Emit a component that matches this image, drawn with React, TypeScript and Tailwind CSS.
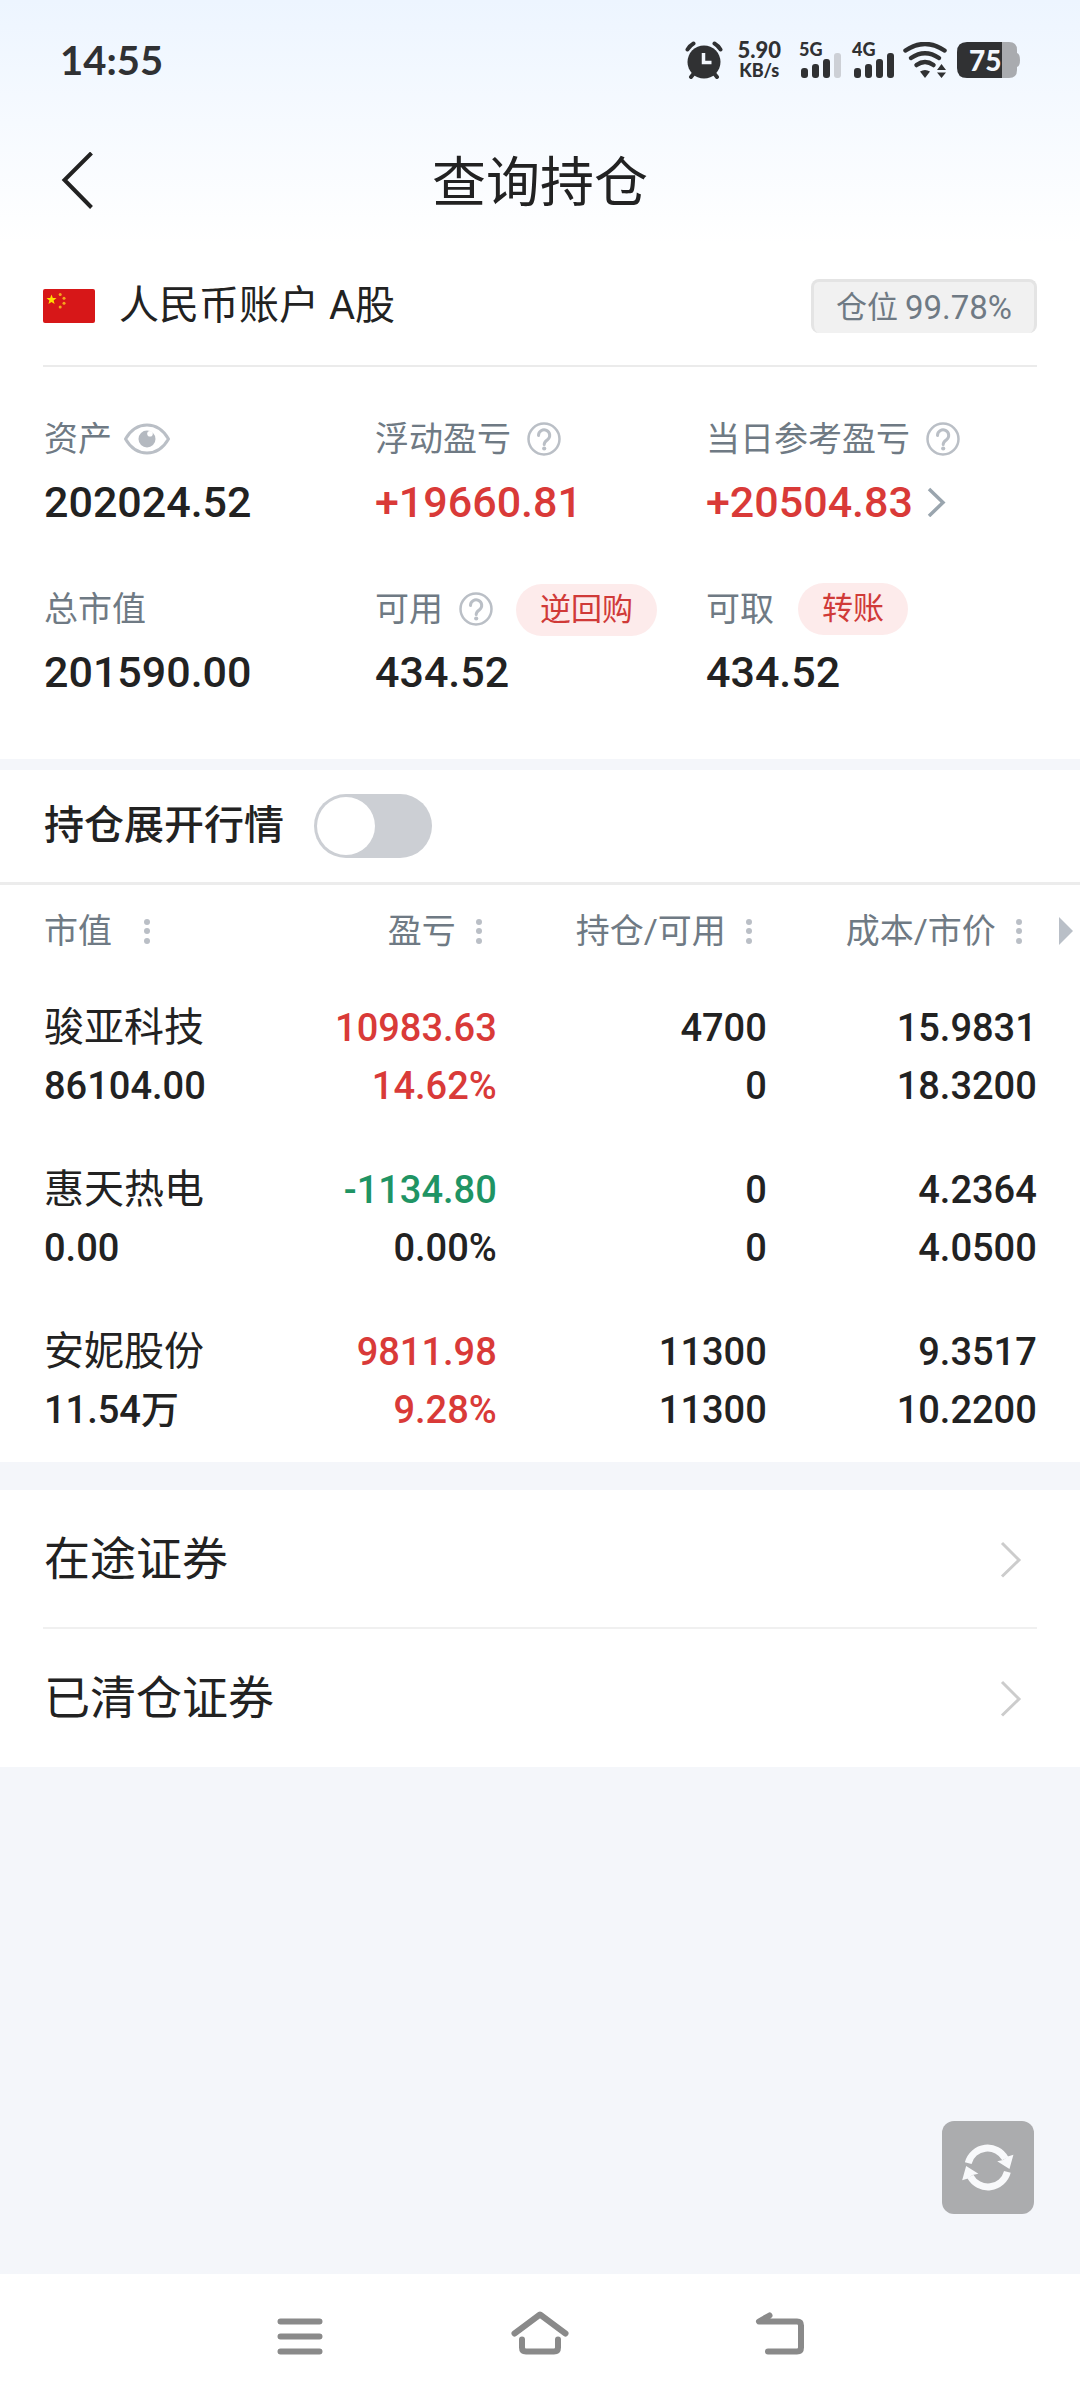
import { useState } from 'react';
import clsx from 'clsx';

type Tone = 'up' | 'down' | 'flat';

interface Holding {
    name: string;
    value: string;
    profit: string;
    profitTone: Tone;
    rate: string;
    rateTone: Tone;
    amount: string;
    available: string;
    cost: string;
    price: string;
}

const toneClass: Record<Tone, string> = {
    up: 'text-[#d93a38]',
    down: 'text-[#1f9464]',
    flat: 'text-[#222222]',
};

const holdings: Holding[] = [
    {
        name: '骏亚科技', value: '86104.00',
        profit: '10983.63', profitTone: 'up', rate: '14.62%', rateTone: 'up',
        amount: '4700', available: '0', cost: '15.9831', price: '18.3200',
    },
    {
        name: '惠天热电', value: '0.00',
        profit: '-1134.80', profitTone: 'down', rate: '0.00%', rateTone: 'flat',
        amount: '0', available: '0', cost: '4.2364', price: '4.0500',
    },
    {
        name: '安妮股份', value: '11.54万',
        profit: '9811.98', profitTone: 'up', rate: '9.28%', rateTone: 'up',
        amount: '11300', available: '11300', cost: '9.3517', price: '10.2200',
    },
];

const columns = ['盈亏', '持仓/可用', '成本/市价'];

const SignalBars = ({ label, level }: { label: string; level: number }) => (
    <div className="relative h-9 w-11">
        <span className="absolute left-0 top-0 text-[18px] leading-[14px] font-black">{label}</span>
        <svg width="44" height="36" viewBox="0 0 44 36">
            {[10, 14, 19, 25].map((h, i) => (
                <rect
                    key={h}
                    x={2 + i * 11}
                    y={36 - h}
                    width="7"
                    height={h}
                    rx="3"
                    fill={i < level ? '#303133' : '#cdd0d6'}
                />
            ))}
        </svg>
    </div>
);

const StatusBar = () => (
    <div className="flex h-[120px] items-center justify-between px-[60px] font-['Lato','Noto_Sans_CJK_SC',sans-serif] text-[#303133]">
        <span className="text-[40px] leading-none font-bold">14:55</span>
        <div className="flex items-center">
            <svg width="38" height="38" viewBox="0 0 38 38" className="mr-[14px]">
                <path d="M10 31l-4 5M28 31l4 5" stroke="#303133" strokeWidth="4" strokeLinecap="round" />
                <path d="M2.5 8.500q2.500-4 6-6M35.500 8.500q-2.500-4-6-6" stroke="#303133" strokeWidth="4" strokeLinecap="round" fill="none" />
                <circle cx="19" cy="21" r="16.500" fill="#303133" />
                <path d="M18.500 12v9.500h8" stroke="#f3f7fd" strokeWidth="3.500" fill="none" />
            </svg>
            <div className="mr-[18px] flex flex-col items-center font-black">
                <span className="text-[22px] leading-[20px]">5.90</span>
                <span className="text-[18px] leading-[20px]">KB/s</span>
            </div>
            <div className="flex gap-[9px]">
                <SignalBars label="5G" level={3} />
                <SignalBars label="4G" level={4} />
            </div>
            <svg width="44" height="36" viewBox="0 0 44 36" className="ml-[7px] mr-[10px]">
                <g stroke="#303133" strokeWidth="4.500" strokeLinecap="round" fill="none">
                    <path d="M2.500 8.500Q22-4.500 41.500 8.500" />
                    <path d="M8 16Q22 6.500 36 16" />
                    <path d="M13.500 23Q22 17 30.500 23" />
                </g>
                <path d="M17 29.500q5-3 10 0l-5 6.500z" fill="#303133" />
                <path d="M34 28l4.500-6 4.500 6zM34 30.500h9l-4.500 5.500z" fill="#303133" />
            </svg>
            <div className="relative h-9 w-[63px]">
                <svg width="63" height="36" viewBox="0 0 63 36">
                    <path d="M45 0h7q8 0 8 8v3q3 1 3 7t-3 7v3q0 8-8 8h-7z" fill="#a9abaf" />
                    <path d="M10 0h35v36H10Q0 36 0 26V10Q0 0 10 0z" fill="#303133" />
                </svg>
                <span className="absolute inset-y-0 left-[12px] text-[28px] leading-[36px] font-black text-[#f3f7fd]">75</span>
            </div>
        </div>
    </div>
);

const HelpButton = ({ label }: { label: string }) => (
    <button aria-label={label}>
        <svg width="36" height="36" viewBox="0 0 36 36" fill="none" stroke="#babfc6">
            <circle cx="18" cy="18" r="15.500" strokeWidth="2.500" />
            <path d="M12.500 14.500a5.600 5.600 0 1 1 9 4.300c-2.300 1.700-3.300 2.300-3.300 4.700" strokeWidth="3" strokeLinecap="round" />
            <circle cx="18.200" cy="27.500" r="2.100" fill="#babfc6" stroke="none" />
        </svg>
    </button>
);

const EyeIcon = () => (
    <svg width="48" height="34" viewBox="0 0 48 34">
        <path d="M2.500 17C8 7.500 15.500 3 24 3s16 4.500 21.500 14C40 26.500 32.500 31 24 31S8 26.500 2.500 17z" fill="none" stroke="#babfc6" strokeWidth="3" strokeLinejoin="round" />
        <circle cx="24" cy="17" r="8.500" fill="#b4b9c0" />
        <circle cx="27" cy="11.800" r="2.800" fill="#fff" />
    </svg>
);

const Pill = ({ children }: { children: string }) => (
    <button className="h-[52px] rounded-full bg-[#fdebeb] px-6 text-[31px] leading-[50px] text-[#d03a38]">
        {children}
    </button>
);

const Dots = () => (
    <svg width="6" height="30" viewBox="0 0 6 30" fill="#babfc6">
        <circle cx="3" cy="6" r="3" />
        <circle cx="3" cy="15" r="3" />
        <circle cx="3" cy="25" r="3" />
    </svg>
);

const LinkRow = ({ label }: { label: string }) => (
    <a href="#" className="flex h-[138px] items-center justify-between pr-[15px] pl-px text-[46px] leading-[60px]">
        {label}
        <svg width="22" height="38" viewBox="0 0 22 38" fill="none" stroke="#cccccc" strokeWidth="3">
            <path d="M2 3L19 20 2 36.500" />
        </svg>
    </a>
);

const App = () => {
    const [expanded, setExpanded] = useState(false);

    return (
        <div className="flex min-h-screen flex-col bg-[#f4f6fa] font-['Roboto','Noto_Sans_CJK_SC',sans-serif] text-[#222222]">
            <header className="bg-linear-to-b from-[#edf5ff] to-white">
                <StatusBar />
                <div className="grid h-[124px] grid-cols-[1fr_auto_1fr] items-center px-[60px]">
                    <button aria-label="返回" className="justify-self-start">
                        <svg width="36" height="60" viewBox="0 0 36 60" fill="none" stroke="#222222" strokeWidth="4">
                            <path d="M31.500 1L4.500 28 31.500 55.500" />
                        </svg>
                    </button>
                    <h1 className="pt-1 text-[54px] leading-[72px]">查询持仓</h1>
                </div>
            </header>

            <section className="bg-white px-[43px]">
                <div className="flex h-[123px] items-center justify-between border-b-2 border-[#ebebeb] pt-[3px]">
                    <div className="flex items-center gap-6">
                        <svg width="52" height="34" viewBox="0 0 52 34">
                            <rect width="52" height="34" rx="2" fill="#d71718" />
                            <path d="M8.500 5.500l1.300 3.500 3.700.1-2.900 2.300 1 3.600-3.100-2.100-3.100 2.100 1-3.600-2.900-2.300 3.700-.1z" fill="#ffde00" />
                            <g fill="#f5a81c">
                                <circle cx="17.200" cy="5.500" r="1.500" />
                                <circle cx="21" cy="9.200" r="1.500" />
                                <circle cx="21" cy="14.300" r="1.500" />
                                <circle cx="17.200" cy="18" r="1.500" />
                            </g>
                        </svg>
                        <h2 className="text-[40px] leading-[52px]">人民币账户 A股</h2>
                    </div>
                    <div className="flex h-[54px] items-center gap-[7px] rounded-lg border-[3px] border-b-0 border-[#e4e4e4] bg-[#f1f1f1] px-[22px] leading-[48px] text-[#6f7a84]">
                        <span className="text-[31px]">仓位</span>
                        <span className="text-[33px]">99.78%</span>
                    </div>
                </div>

                <dl className="grid grid-cols-3 gap-y-[55px] pt-[46px] pb-[61px] pl-px text-[34px] text-[#6f7a84]">
                    <div>
                        <dt className="flex h-[52px] items-center gap-[11px]">
                            资产
                            <button aria-label="隐藏资产"><EyeIcon /></button>
                        </dt>
                        <dd className="mt-[11px] text-[43px] leading-[52px] font-medium text-[#222222]">202024.52</dd>
                    </div>
                    <div>
                        <dt className="flex h-[52px] items-center gap-[15px]">
                            浮动盈亏
                            <HelpButton label="浮动盈亏说明" />
                        </dt>
                        <dd className="mt-[11px] text-[43px] leading-[52px] font-medium text-[#d93a38]">+19660.81</dd>
                    </div>
                    <div>
                        <dt className="flex h-[52px] items-center gap-[15px]">
                            当日参考盈亏
                            <HelpButton label="当日参考盈亏说明" />
                        </dt>
                        <dd className="mt-[11px] flex items-center gap-[14px] text-[43px] leading-[52px] font-medium text-[#d93a38]">
                            +20504.83
                            <svg width="20" height="30" viewBox="0 0 20 30" fill="none" stroke="#9aa5ae" strokeWidth="3.500">
                                <path d="M2 2l14 13.500L2 29" />
                            </svg>
                        </dd>
                    </div>
                    <div>
                        <dt className="flex h-[52px] items-center">总市值</dt>
                        <dd className="mt-[11px] text-[43px] leading-[52px] font-medium text-[#222222]">201590.00</dd>
                    </div>
                    <div>
                        <dt className="flex h-[52px] items-center gap-[15px]">
                            可用
                            <HelpButton label="可用说明" />
                            <span className="pl-[7px]"><Pill>逆回购</Pill></span>
                        </dt>
                        <dd className="mt-[11px] text-[43px] leading-[52px] font-medium text-[#222222]">434.52</dd>
                    </div>
                    <div>
                        <dt className="flex h-[52px] items-center gap-6">
                            可取
                            <Pill>转账</Pill>
                        </dt>
                        <dd className="mt-[11px] text-[43px] leading-[52px] font-medium text-[#222222]">434.52</dd>
                    </div>
                </dl>
            </section>

            <section className="mt-[11px] bg-white">
                <label className="flex h-[115px] items-center gap-[30px] border-b-[3px] border-[#ececec] px-11 text-[40px] leading-[52px] font-medium">
                    持仓展开行情
                    <input
                        type="checkbox"
                        role="switch"
                        checked={expanded}
                        onChange={(e) => setExpanded(e.target.checked)}
                        className="flex h-16 w-[118px] appearance-none items-center rounded-full bg-[#cccfd4] px-[3px] before:h-[58px] before:w-[58px] before:rounded-full before:bg-white checked:justify-end checked:bg-[#d93a38]"
                    />
                </label>

                <table className="w-full table-fixed">
                    <thead className="text-[34px] leading-[52px] text-[#6f7a84]">
                        <tr className="h-[91px]">
                            <th className="w-[21%] pl-11 font-normal">
                                <button className="flex items-center gap-8">
                                    市值
                                    <Dots />
                                </button>
                            </th>
                            {columns.map((col) => (
                                <th key={col} className="w-[25%] pr-[15px] font-normal">
                                    <button className="ml-auto flex items-center gap-5">
                                        {col}
                                        <Dots />
                                    </button>
                                </th>
                            ))}
                            <th className="w-[4%] pr-[7px]">
                                <button aria-label="更多列" className="ml-auto block">
                                    <svg width="14" height="28" viewBox="0 0 14 28" fill="#b9bfc7">
                                        <path d="M0 0l14 14L0 28z" />
                                    </svg>
                                </button>
                            </th>
                        </tr>
                    </thead>
                    <tbody className="text-[38px] leading-[58px] font-medium">
                        {holdings.map((h) => (
                            <tr key={h.name} className="h-[162px] text-right">
                                <td className="pl-11 text-left whitespace-nowrap">
                                    <div className="text-[40px] font-normal">{h.name}</div>
                                    <div>{h.value}</div>
                                </td>
                                <td>
                                    <div className={clsx(toneClass[h.profitTone])}>{h.profit}</div>
                                    <div className={clsx(toneClass[h.rateTone])}>{h.rate}</div>
                                </td>
                                <td>
                                    <div>{h.amount}</div>
                                    <div>{h.available}</div>
                                </td>
                                <td>
                                    <div>{h.cost}</div>
                                    <div>{h.price}</div>
                                </td>
                                <td />
                            </tr>
                        ))}
                    </tbody>
                </table>
            </section>

            <section className="mt-7 bg-white px-[43px]">
                <LinkRow label="在途证券" />
                <hr className="-mt-px border-t-2 border-[#f0f0f0]" />
                <LinkRow label="已清仓证券" />
            </section>

            <div className="flex flex-1 items-end justify-end pr-[46px] pb-[60px]">
                <button aria-label="刷新" className="rounded-xl bg-[#abacae]">
                    <svg width="92" height="93" viewBox="0 0 93 93">
                        <g id="arrow">
                            <path d="M26.500 42A20.300 20.300 0 0 1 64 37.500" fill="none" stroke="#f8f9fb" strokeWidth="7" />
                            <path d="M68.200 48L55.800 40.300l6-1.300 4.700-3.500 5.700-2z" fill="#f8f9fb" />
                        </g>
                        <use href="#arrow" transform="rotate(180 46.300 46.500)" />
                    </svg>
                </button>
            </div>

            <nav className="grid h-[126px] grid-cols-3 place-items-center bg-white px-[180px] pb-2">
                <button aria-label="菜单">
                    <svg width="58" height="44" viewBox="0 0 58 44" stroke="#8a8a8a" strokeWidth="6" strokeLinecap="round">
                        <path d="M9.500 10.500h39M9.500 25.500h39M9.500 40.500h39" />
                    </svg>
                </button>
                <button aria-label="主页">
                    <svg width="58" height="44" viewBox="0 0 58 44" fill="none" stroke="#8a8a8a" strokeWidth="6" strokeLinecap="round" strokeLinejoin="round">
                        <path d="M3.500 22.500L29 3.500l25.500 19" />
                        <path d="M11 28.500V36.500q0 4 4 4h28q4 0 4-4v-8" />
                    </svg>
                </button>
                <button aria-label="后退">
                    <svg width="58" height="44" viewBox="0 0 58 44" fill="none" stroke="#8a8a8a" strokeWidth="6" strokeLinecap="round" strokeLinejoin="round">
                        <path d="M18.500 4.500L8 10.500h38q4 0 4 4v22q0 4-4 4H17" />
                    </svg>
                </button>
            </nav>
        </div>
    );
};

export default App;
